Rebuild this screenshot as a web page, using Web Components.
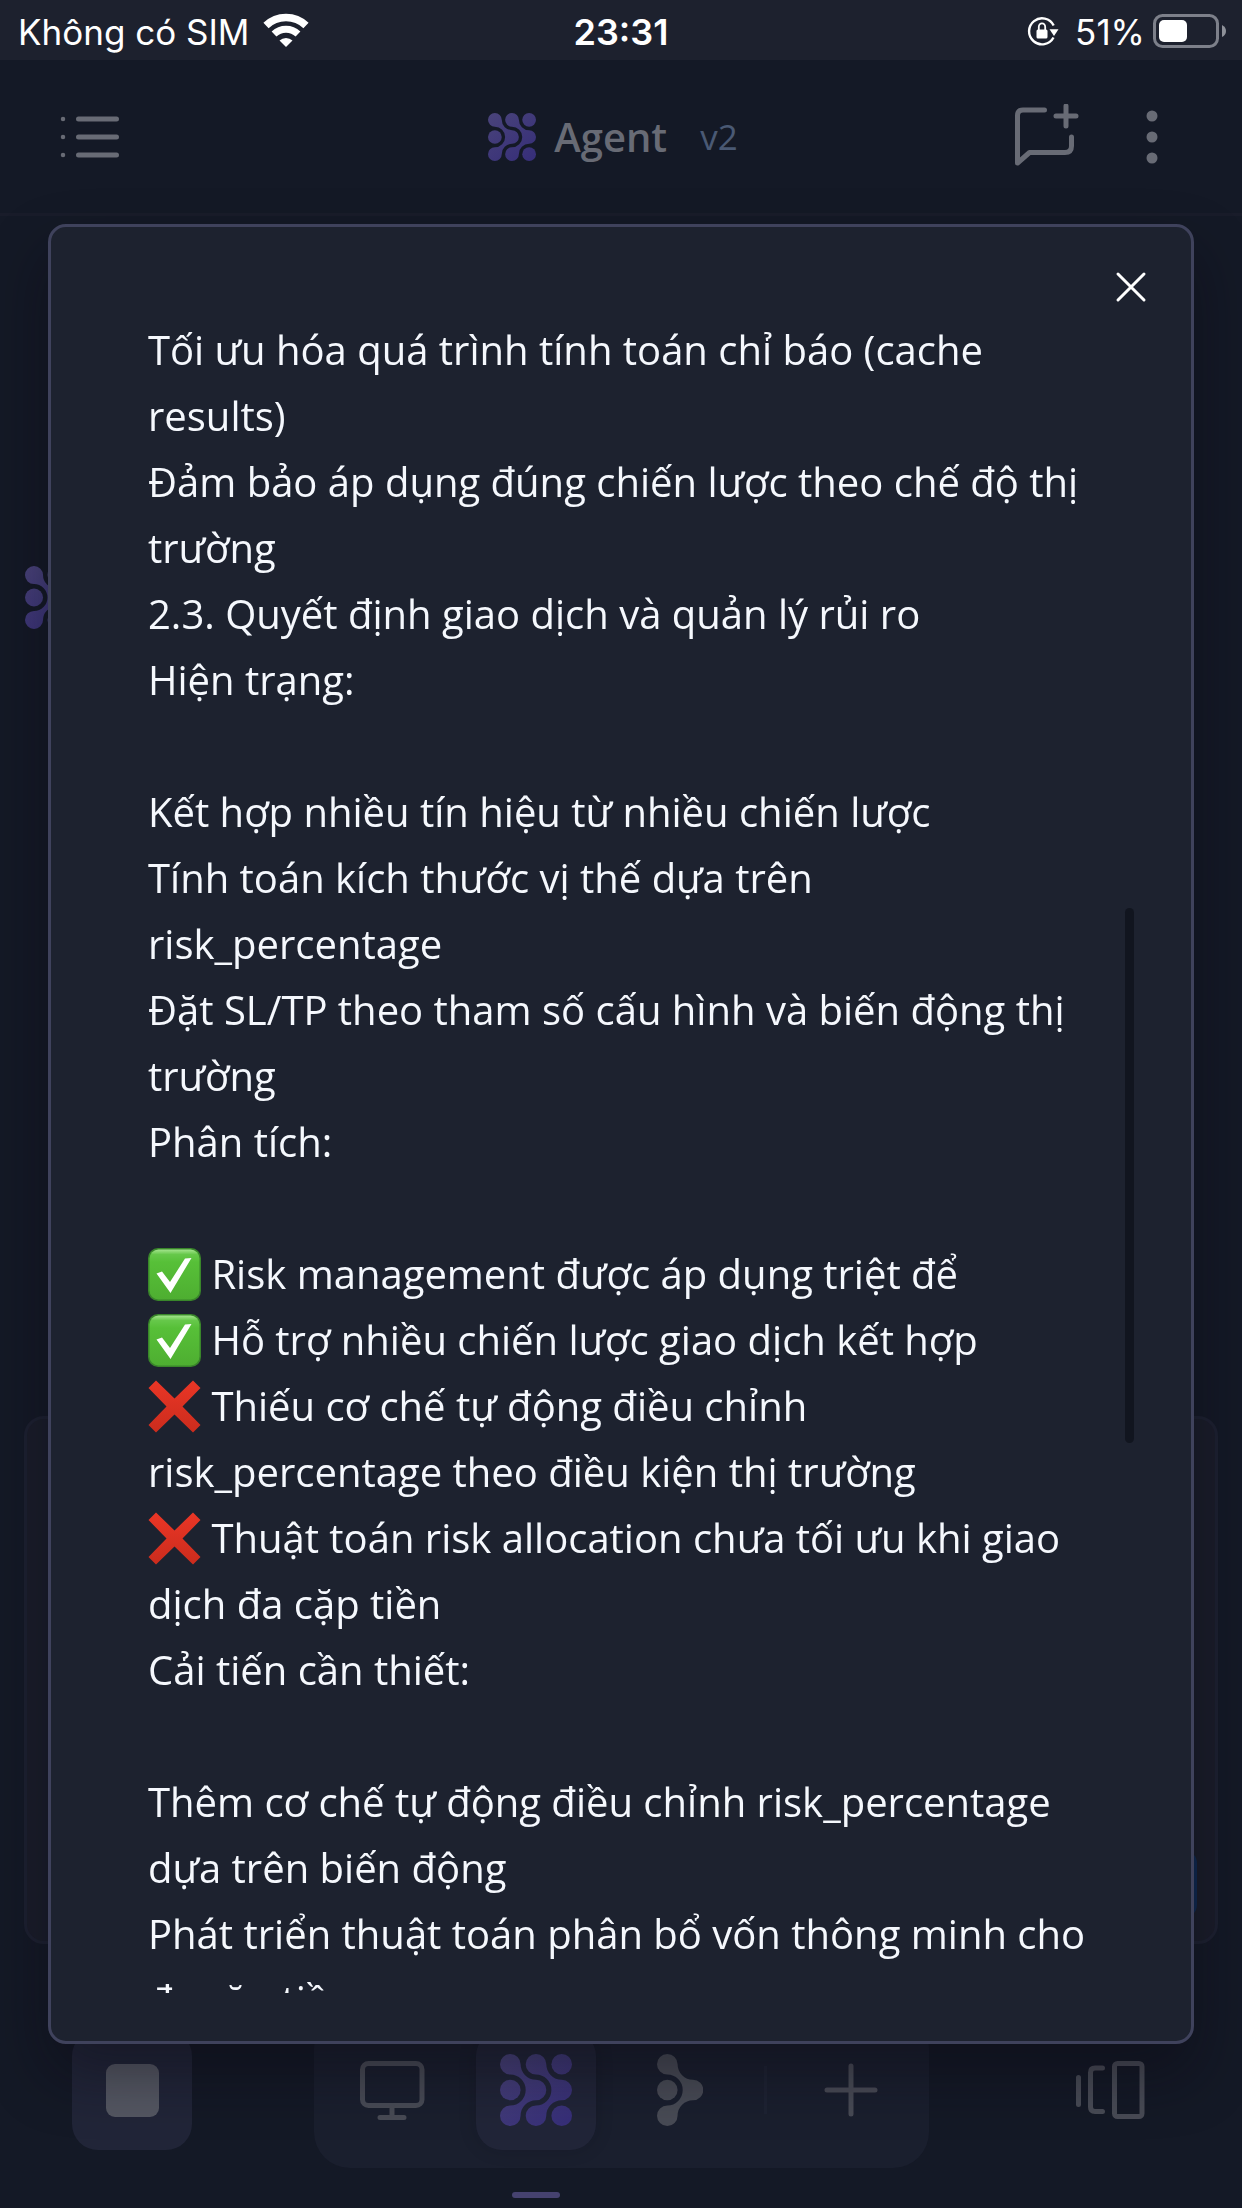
<!DOCTYPE html>
<html lang="vi">
<head>
<meta charset="utf-8">
<meta name="viewport" content="width=device-width, initial-scale=1">
<title>Agent</title>
<style>
  html, body { margin: 0; height: 100%; background: #141926; }
  body { font-family: "Open Sans", "Noto Sans", sans-serif; color: #f5f8fd; }
</style>
</head>
<body>
<agent-app></agent-app>

<script>
const define = (name, html) => {
  const template = document.createElement('template');
  template.innerHTML = html;
  customElements.define(name, class extends HTMLElement {
    constructor() {
      super();
      this.attachShadow({ mode: 'open' }).append(template.content.cloneNode(true));
    }
  });
};

const CHEVRON = 'M20.6 10.3A15.4 15.4 0 0 0 36 25.7A10.3 10.3 0 0 1 36 46.3A15.4 15.4 0 0 0 20.6 61.7A10.3 10.3 0 1 1 10.3 51.4A15.4 15.4 0 0 0 10.3 20.6A10.3 10.3 0 1 1 20.6 10.3Z';

define('agent-logo', `
  <style>
    :host { display: block; width: var(--logo-size, 72px); height: var(--logo-size, 72px); }
    svg { display: block; width: 100%; height: 100%; }
  </style>
  <svg viewBox="0 0 72 72" aria-hidden="true">
    <defs><linearGradient id="g" gradientUnits="userSpaceOnUse" x1="4" y1="0" x2="60" y2="72">
      <stop offset="0" stop-color="#49437a"/><stop offset="1" stop-color="#372f79"/>
    </linearGradient></defs>
    <g fill="url(#g)">
      <path d="${CHEVRON}"/>
      <path d="M46.3 10.3A15.4 15.4 0 0 0 61.7 25.7A10.3 10.3 0 0 1 61.7 46.3A15.4 15.4 0 0 0 46.3 61.7A10.3 10.3 0 1 1 36 51.4A15.4 15.4 0 0 0 36 20.6A10.3 10.3 0 1 1 46.3 10.3Z"/>
      <circle cx="10.3" cy="36" r="10.3"/><circle cx="61.7" cy="10.3" r="10.3"/><circle cx="61.7" cy="61.7" r="10.3"/>
    </g>
  </svg>`);

define('status-bar', `
  <style>
    :host { display: grid; grid-template-columns: 1fr auto 1fr; align-items: center; height: 60px;
      padding: 0 18px; background: #1d212e; color: #fff; font: 400 35px/60px Inter, "Noto Sans", sans-serif; }
    .side { display: flex; align-items: center; gap: 14px; }
    .end { justify-content: flex-end; gap: 8px; }
    span, b { padding-top: 2px; }
    b { font-weight: 600; font-size: 36px; }
    svg { display: block; flex: none; overflow: visible; }
    .lock { margin-right: 8px; }
  </style>
  <div class="side"><span>Không có SIM</span>
    <svg width="46" height="34" viewBox="0 0 46 34" fill="none" stroke="#fff" aria-hidden="true">
      <path d="M3 11.5A29 29 0 0 1 43 11.5" stroke-width="7.5"/>
      <path d="M11 20A17.500 17.500 0 0 1 35 20" stroke-width="7"/>
      <path d="M16.500 26.500A9.500 9.500 0 0 1 29.500 26.500L23 33Z" fill="#fff" stroke="none"/>
    </svg>
  </div>
  <b>23:31</b>
  <div class="side end">
    <svg class="lock" width="32" height="30" viewBox="0 0 32 30" aria-hidden="true">
      <path d="M26.500 21.500A13 13 0 1 1 26.700 9.500" fill="none" stroke="#fff" stroke-width="2.400"/>
      <path d="M22.500 13.200H31.500L27 20Z" fill="#fff"/>
      <rect x="9.500" y="13.500" width="11" height="9" rx="1.500" fill="#fff"/>
      <path d="M11.800 14V11A3.200 3.600 0 0 1 18.200 11V14" fill="none" stroke="#fff" stroke-width="1.800"/>
    </svg>
    <span>51%</span>
    <svg width="71" height="34" viewBox="0 0 71 34" aria-hidden="true">
      <rect x="1.500" y="1.500" width="63" height="31" rx="8" fill="none" stroke="#7d808a" stroke-width="3"/>
      <rect x="6" y="6" width="28" height="22" rx="5" fill="#fff"/>
      <path d="M69 11Q73 13 73 17T69 23Z" fill="#8e9199"/>
    </svg>
  </div>`);

define('app-header', `
  <style>
    :host { display: grid; grid-template-columns: 1fr auto 1fr; align-items: center; height: 153px;
      padding: 0 60px; border-bottom: 3px solid #191c2a; color: #686b75; }
    h1 { margin: 0; padding-right: 16px; display: flex; align-items: center; gap: 18px; font-size: 40px; line-height: 60px; font-weight: 600; --logo-size: 48px; }
    small { font-size: 35px; font-weight: 400; color: #4a5974; margin-left: 15px; }
    button { display: block; padding: 0; border: 0; background: none; color: inherit; }
    svg { display: block; fill: none; stroke: currentColor; stroke-width: 5; stroke-linecap: round; stroke-linejoin: round; }
    .end { display: flex; justify-content: flex-end; align-items: center; gap: 43px; }
  </style>
  <div><button aria-label="Menu"><svg width="60" height="60" viewBox="0 0 60 60">
    <path d="M18.500 12H56.500M18.500 30H56.500M18.500 48H56.500"/><path stroke-width="4.500" d="M3 12h.01M3 30h.01M3 48h.01"/></svg></button></div>
  <h1><agent-logo></agent-logo><span>Agent</span><small>v2</small></h1>
  <div class="end">
    <button aria-label="New chat"><svg width="66" height="66" viewBox="0 0 66 66">
      <path d="M31.500 6H10Q4.500 6 4.500 11.500V59L16.500 48.500H52Q58.500 48.500 58.500 42V33M53 2V22M43 12H63"/></svg></button>
    <button aria-label="More"><svg width="60" height="60" viewBox="0 0 60 60" style="fill:currentColor;stroke:none">
      <circle cx="30" cy="9" r="5.500"/><circle cx="30" cy="30" r="5.500"/><circle cx="30" cy="51" r="5.500"/></svg></button>
  </div>`);

define('chat-composer', `
  <style>
    :host { display: flex; flex-direction: column; box-sizing: border-box; height: 528px; margin: 0 24px; padding: 18px;
      border: 3px solid #1d2131; border-radius: 20px; background: #1a1d2a; }
    textarea { flex: 1; border: 0; background: none; resize: none; color: inherit; font: inherit; }
    button { align-self: flex-end; width: 96px; height: 66px; margin-bottom: 6px; border: 0; border-radius: 12px; background: #0f2950; }
  </style>
  <textarea aria-label="Message"></textarea>
  <button aria-label="Send"></button>`);

define('chat-stage', `
  <style>
    :host { display: block; flex: 1; min-height: 0; padding: 350px 25px 0; --logo-size: 63px; }
  </style>
  <agent-logo></agent-logo>`);

define('tool-dock', `
  <style>
    :host { display: flex; align-items: center; justify-content: space-between; padding: 68px 72px 40px; color: #484b55; }
    nav { display: flex; align-items: center; gap: 24px; padding: 18px; border-radius: 36px; background: #1a1f2e; }
    button { position: relative; display: grid; place-items: center; width: 120px; height: 120px; padding: 0; border: 0;
      border-radius: 26px; background: none; color: inherit; }
    .stop, .active { background: #212538; }
    .active { box-shadow: 0 0 18px rgba(10, 10, 20, .16); }
    .active::after { content: ""; position: absolute; top: 162px; left: 36px; right: 36px; height: 6px; border-radius: 3px; background: #46426f; }
    .stop i { width: 53px; height: 53px; border-radius: 9px; background: #545762; }
    hr { width: 3px; height: 48px; margin: 0; border: 0; background: #1e2333; }
    svg { display: block; fill: none; stroke: currentColor; stroke-width: 5; stroke-linecap: round; stroke-linejoin: round; }
  </style>
  <button class="stop" aria-label="Stop"><i></i></button>
  <nav>
    <button aria-label="Screen"><svg width="72" height="72" viewBox="0 0 72 72">
      <rect x="6.500" y="9.500" width="59.500" height="42" rx="6"/><path d="M36 52V63M24 63.500H48"/></svg></button>
    <button class="active" aria-label="Agent"><agent-logo></agent-logo></button>
    <button aria-label="Flow"><svg width="46" height="72" viewBox="0 0 46 72" style="fill:currentColor;stroke:none">
      <path d="${CHEVRON}"/><circle cx="10.3" cy="36" r="10.3"/></svg></button>
    <hr>
    <button aria-label="Add"><svg width="72" height="72" viewBox="0 0 72 72" stroke="#50535e"><path d="M36 12V60M12 36H60"/></svg></button>
  </nav>
  <button aria-label="Panels"><svg width="72" height="72" viewBox="0 0 72 72">
    <path d="M4.500 23.500V50.500M28.500 14H21Q16.500 14 16.500 18.500V53Q16.500 57.500 21 57.500H28.500"/><rect x="40.500" y="9.500" width="27.500" height="53" rx="3"/></svg></button>`);

define('mark-yes', `
  <style>:host { display: inline-block; width: 53px; height: 53px; vertical-align: -12px; } svg { display: block; }</style>
  <svg width="53" height="53" viewBox="0 0 53 53" role="img" aria-label="✅">
    <defs><linearGradient id="g" x1="0" y1="0" x2="0" y2="1"><stop offset="0" stop-color="#a5e58e"/><stop offset=".1" stop-color="#66c84a"/><stop offset=".25" stop-color="#57c038"/><stop offset="1" stop-color="#4eae31"/></linearGradient></defs>
    <rect width="53" height="53" rx="10" fill="#39862a"/>
    <rect x="1.500" y="1.500" width="50" height="50" rx="9" fill="url(#g)"/>
    <path d="M8.500 25.500L14 23.500L22 34L37 10.500L43.500 10L22.500 45Z" fill="#fff"/>
  </svg>`);

define('mark-no', `
  <style>:host { display: inline-block; width: 53px; height: 53px; vertical-align: -12px; } svg { display: block; }</style>
  <svg width="53" height="53" viewBox="0 0 53 53" role="img" aria-label="❌">
    <defs><linearGradient id="g" x1="0" y1="0" x2="0" y2="1"><stop offset="0" stop-color="#ea3626"/><stop offset="1" stop-color="#cb2c1d"/></linearGradient></defs>
    <path d="M8 .5L26.500 18.500L45 .5L52.500 8L34.500 26.500L52.500 45L45 52.500L26.500 34.500L8 52.500L.5 45L18.500 26.500L.5 8Z" fill="url(#g)"/>
  </svg>`);

define('text-dialog', `
  <style>
    :host { position: fixed; inset: 224px 48px 164px; box-sizing: border-box; display: flex; flex-direction: column;
      padding: 36px 57px 48px 97px; border: 3px solid #3f425c; border-radius: 18px; background: #1d222f;
      box-shadow: 0 30px 60px rgba(10, 6, 16, .42); }
    button { align-self: flex-end; margin: 0 -21px 6px 0; padding: 0; border: 0; background: none; width: 48px; height: 48px; }
    button svg { display: block; stroke: #fff; stroke-width: 3; stroke-linecap: round; }
    .scroll { position: relative; flex: 1; min-height: 0; overflow: hidden; padding-right: 37px; }
    .thumb { position: absolute; right: 0; top: 591px; width: 9px; height: 535px; border-radius: 5px; background: #11151f; }
  </style>
  <button aria-label="Close"><svg width="48" height="48" viewBox="0 0 48 48"><path d="M11 11L37 37M37 11L11 37"/></svg></button>
  <div class="scroll"><slot></slot><div class="thumb"></div></div>`);

define('report-text', `
  <style>
    :host { display: block; font-size: 40px; line-height: 66px; }
    p { margin: 0 0 66px; }
  </style>
  <p>Tối ưu hóa quá trình tính toán chỉ báo (cache results)<br>Đảm bảo áp dụng đúng chiến lược theo chế độ thị trường<br>2.3. Quyết định giao dịch và quản lý rủi ro<br>Hiện trạng:</p>
  <p>Kết hợp nhiều tín hiệu từ nhiều chiến lược<br>Tính toán kích thước vị thế dựa trên risk_percentage<br>Đặt SL/TP theo tham số cấu hình và biến động thị trường<br>Phân tích:</p>
  <p><mark-yes></mark-yes> Risk management được áp dụng triệt để<br><mark-yes></mark-yes> Hỗ trợ nhiều chiến lược giao dịch kết hợp<br><mark-no></mark-no> Thiếu cơ chế tự động điều chỉnh risk_percentage theo điều kiện thị trường<br><mark-no></mark-no> Thuật toán risk allocation chưa tối ưu khi giao dịch đa cặp tiền<br>Cải tiến cần thiết:</p>
  <p>Thêm cơ chế tự động điều chỉnh risk_percentage dựa trên biến động<br>Phát triển thuật toán phân bổ vốn thông minh cho đa cặp tiền</p>`);

define('agent-app', `
  <style>
    :host { display: flex; flex-direction: column; min-height: 100vh; }
  </style>
  <status-bar></status-bar>
  <app-header></app-header>
  <chat-stage></chat-stage>
  <chat-composer></chat-composer>
  <tool-dock></tool-dock>
  <text-dialog role="dialog" aria-modal="true"><report-text></report-text></text-dialog>`);
</script>
</body>
</html>
